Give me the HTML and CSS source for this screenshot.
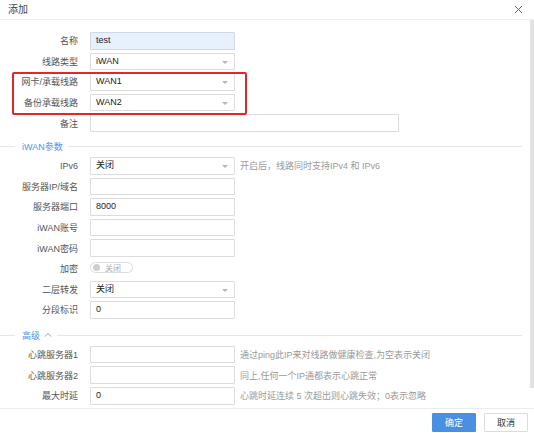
FILE: index.html
```html
<!DOCTYPE html>
<html lang="zh">
<head>
<meta charset="utf-8">
<link rel="stylesheet" href="styles.css">
</head>
<body>
<div class="dialog">
  <div class="header">
    <span class="title">添加</span>
    <svg class="close" width="9" height="9" viewBox="0 0 9 9"><path d="M1 1L8 8M8 1L1 8" stroke="#666" stroke-width="1" fill="none"/></svg>
  </div>
  <div class="main">
    <div class="content">
      <div class="row"><span class="label">名称</span><div class="ctl input autofill">test</div></div>
      <div class="row"><span class="label">线路类型</span><div class="ctl input select">iWAN<i class="caret"></i></div></div>
      <div class="row"><span class="label">网卡/承载线路</span><div class="ctl input select">WAN1<i class="caret"></i></div></div>
      <div class="row"><span class="label">备份承载线路</span><div class="ctl input select">WAN2<i class="caret"></i></div></div>
      <div class="row"><span class="label">备注</span><div class="ctl input wide"></div></div>
      <div class="section"><span class="sec-line short"></span><span class="sec-title">iWAN参数</span><span class="sec-line"></span></div>
      <div class="row"><span class="label">IPv6</span><div class="ctl input select">关闭<i class="caret"></i></div><span class="hint">开启后，线路同时支持IPv4 和 IPv6</span></div>
      <div class="row"><span class="label">服务器IP/域名</span><div class="ctl input"></div></div>
      <div class="row"><span class="label">服务器端口</span><div class="ctl input">8000</div></div>
      <div class="row"><span class="label">iWAN账号</span><div class="ctl input"></div></div>
      <div class="row"><span class="label">iWAN密码</span><div class="ctl input"></div></div>
      <div class="row"><span class="label">加密</span><div class="ctl toggle"><i class="knob"></i><span>关闭</span></div></div>
      <div class="row"><span class="label">二层转发</span><div class="ctl input select">关闭<i class="caret"></i></div></div>
      <div class="row"><span class="label">分段标识</span><div class="ctl input">0</div></div>
      <div class="section sec2"><span class="sec-line short"></span><span class="sec-title">高级<svg class="chev" width="8" height="5" viewBox="0 0 8 5"><path d="M1 4.5L4 1.5L7 4.5" stroke="#5b9be6" stroke-width="0.9" fill="none"/></svg></span><span class="sec-line"></span></div>
      <div class="row"><span class="label">心跳服务器1</span><div class="ctl input"></div><span class="hint">通过ping此IP来对线路做健康检查,为空表示关闭</span></div>
      <div class="row"><span class="label">心跳服务器2</span><div class="ctl input"></div><span class="hint">同上,任何一个IP通都表示心跳正常</span></div>
      <div class="row"><span class="label">最大时延</span><div class="ctl input">0</div><span class="hint">心跳时延连续 5 次超出则心跳失效；0表示忽略</span></div>
      <div class="row"><span class="label"></span><div class="ctl input"></div></div>
    </div>
    <div class="track"><div class="thumb"></div></div>
  </div>
  <div class="footer">
    <button class="btn primary">确定</button>
    <button class="btn">取消</button>
  </div>
  <div class="highlight"></div>
</div>
</body>
</html>
```

FILE: styles.css
```css
* { box-sizing: border-box; }
html, body { margin: 0; padding: 0; background: #fff; }
body {
  font-family: "Liberation Sans", "Noto Sans CJK SC", sans-serif;
  font-size: 9px;
  color: #333;
  width: 534px;
  height: 433px;
  overflow: hidden;
}
.dialog { position: relative; width: 534px; height: 433px; display: flex; flex-direction: column; }
.header {
  height: 20px;
  flex-shrink: 0;
  border-bottom: 1px solid #eeeeee;
  display: flex;
  align-items: flex-start;
  justify-content: space-between;
  padding: 4px 11px 0 8px;
}
.title { font-size: 10px; color: #444; line-height: 11px; }
.close { margin-top: 1px; }
.main { height: 388px; flex-shrink: 0; display: flex; overflow: hidden; }
.content { flex: 1; padding-top: 12px; overflow: hidden; display: flex; flex-direction: column; gap: 3px; }
.track { width: 4px; flex-shrink: 0; }
.thumb { width: 4px; height: 368px; background: #e2e2e2; }
.row { display: flex; align-items: center; height: 17.6px; flex-shrink: 0; }
.label { width: 78px; text-align: right; color: #555; flex-shrink: 0; }
.ctl { margin-left: 12px; flex-shrink: 0; }
.input {
  width: 145px;
  height: 17.6px;
  border: 1px solid #dcdcdc;
  border-radius: 1px;
  background: #fff;
  padding-left: 5px;
  line-height: 15.6px;
  color: #222;
  position: relative;
}
.input.autofill { background: #e8f0fe; border-color: #cfd8e6; }
.input.wide { width: 309px; }
.caret {
  position: absolute;
  right: 6px;
  top: 7px;
  width: 0; height: 0;
  border-left: 3px solid transparent;
  border-right: 3px solid transparent;
  border-top: 3px solid #b8b8b8;
}
.hint { margin-left: 5px; color: #9a9a9a; white-space: nowrap; }
.section { display: flex; align-items: center; height: 19px; padding-top: 5px; flex-shrink: 0; }
.section.sec2 { height: 21px; padding-top: 6px; }
.sec-line { flex: 1; height: 1px; background: #e6e6e6; margin-right: 8px; }
.sec-line.short { flex: 0 0 15px; margin-right: 7px; }
.sec-title { color: #4d94e6; font-size: 9px; margin-right: 5px; display: flex; align-items: center; gap: 4px; }
.chev { margin-top: -1px; }
.toggle {
  width: 43px; height: 11px;
  border: 1px solid #dddddd;
  border-radius: 6px;
  display: flex; align-items: center;
  padding-left: 2px;
  margin-top: -3px;
  color: #aaa;
  font-size: 8px;
}
.knob { width: 7px; height: 7px; border-radius: 50%; background: #cfcfcf; margin-right: 5px; }
.footer {
  height: 25px;
  flex-shrink: 0;
  border-top: 1px solid #ececec;
  display: flex;
  justify-content: flex-end;
  align-items: flex-start;
  gap: 8px;
  padding: 4px 6px 0 0;
}
.btn {
  width: 44px; height: 19px;
  border: 1px solid #dcdcdc;
  background: #fff;
  color: #333;
  font-family: inherit;
  font-size: 9px;
  border-radius: 1px;
  padding: 0;
}
.btn.primary { background: #4a90e2; border-color: #4a90e2; color: #fff; }
.highlight {
  position: absolute;
  left: 12px; top: 72px;
  width: 235px; height: 43px;
  border: 2px solid #e3262a;
  border-radius: 2px;
  pointer-events: none;
}
```
